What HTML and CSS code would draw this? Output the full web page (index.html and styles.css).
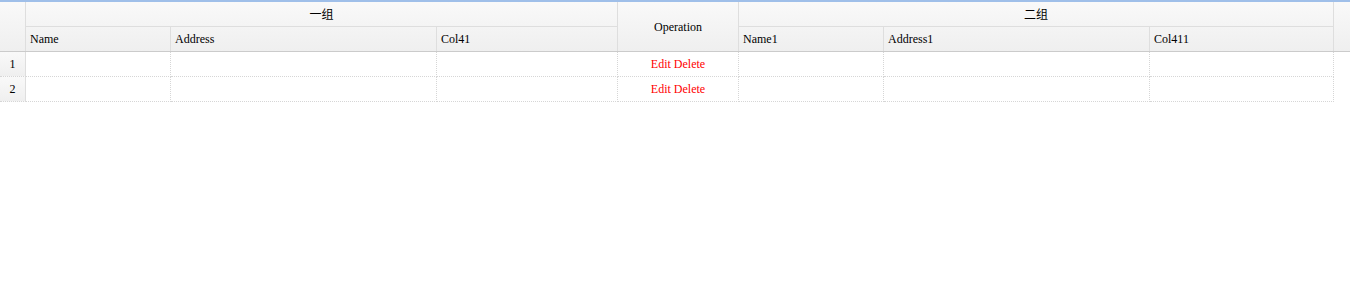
FILE: index.html
```html
<!DOCTYPE html>
<html>
<head>
    <title>datagrid</title>
    <link rel="stylesheet" href="styles.css">
</head>
<body>
    <div class="datagrid">
        <div class="datagrid-header">
            <table class="grid header-grid">
                <colgroup>
                    <col class="w-rownum">
                    <col class="w-name">
                    <col class="w-address">
                    <col class="w-col41">
                    <col class="w-op">
                    <col class="w-name">
                    <col class="w-address">
                    <col class="w-col411">
                    <col class="w-filler">
                </colgroup>
                <tr class="group-row">
                    <td rowspan="2" class="rownum"></td>
                    <td colspan="3" class="group">一组</td>
                    <td rowspan="2" class="center op-title">Operation</td>
                    <td colspan="3" class="group">二组</td>
                    <td rowspan="2" class="filler"></td>
                </tr>
                <tr class="field-row">
                    <td>Name</td>
                    <td>Address</td>
                    <td>Col41</td>
                    <td>Name1</td>
                    <td>Address1</td>
                    <td>Col411</td>
                </tr>
            </table>
        </div>
        <div class="datagrid-body">
            <table class="grid body-grid">
                <colgroup>
                    <col class="w-rownum">
                    <col class="w-name">
                    <col class="w-address">
                    <col class="w-col41">
                    <col class="w-op">
                    <col class="w-name">
                    <col class="w-address">
                    <col class="w-col411">
                </colgroup>
                <tr>
                    <td class="rownum">1</td>
                    <td></td>
                    <td></td>
                    <td></td>
                    <td class="center"><a class="op">Edit</a> <a class="op">Delete</a></td>
                    <td></td>
                    <td></td>
                    <td></td>
                </tr>
                <tr>
                    <td class="rownum">2</td>
                    <td></td>
                    <td></td>
                    <td></td>
                    <td class="center"><a class="op">Edit</a> <a class="op">Delete</a></td>
                    <td></td>
                    <td></td>
                    <td></td>
                </tr>
            </table>
        </div>
    </div>
</body>
</html>
```

FILE: styles.css
```css
body {
    margin: 0;
    background: #fff;
    font-family: "Liberation Serif", "Noto Sans CJK SC", serif;
    font-size: 12px;
    color: #000;
}
.datagrid {
    border-top: 2px solid #9fbfe9;
}
.datagrid-header {
    background: linear-gradient(to bottom, #f9f9f9 0, #efefef 100%);
    border-bottom: 1px solid #cbcbcb;
}
.grid {
    table-layout: fixed;
    border-collapse: separate;
    border-spacing: 0;
}
.header-grid {
    width: 1350px;
}
.body-grid {
    width: 1334px;
}
.w-rownum { width: 26px; }
.w-name { width: 145px; }
.w-address { width: 266px; }
.w-col41 { width: 181px; }
.w-op { width: 121px; }
.w-col411 { width: 184px; }
.w-filler { width: 16px; }
.grid td {
    box-sizing: border-box;
    padding: 0 4px;
    white-space: nowrap;
    overflow: hidden;
    border-right: 1px solid #dedede;
}
.group-row td {
    height: 25px;
}
.group-row .group {
    text-align: center;
    border-bottom: 1px solid #dedede;
}
.field-row td {
    height: 24px;
}
.center {
    text-align: center;
}
.header-grid .op-title {
    padding-top: 2px;
}
.header-grid .filler {
    border-right: none;
}
.body-grid td {
    height: 25px;
    border-right: 1px dotted #d6d6d6;
    border-bottom: 1px dotted #d6d6d6;
}
.body-grid .rownum {
    text-align: center;
    padding: 0;
    background: linear-gradient(to bottom, #f9f9f9 0, #efefef 100%);
    border-right: 1px solid #dedede;
}
.op {
    color: #f00;
    cursor: pointer;
}
```
